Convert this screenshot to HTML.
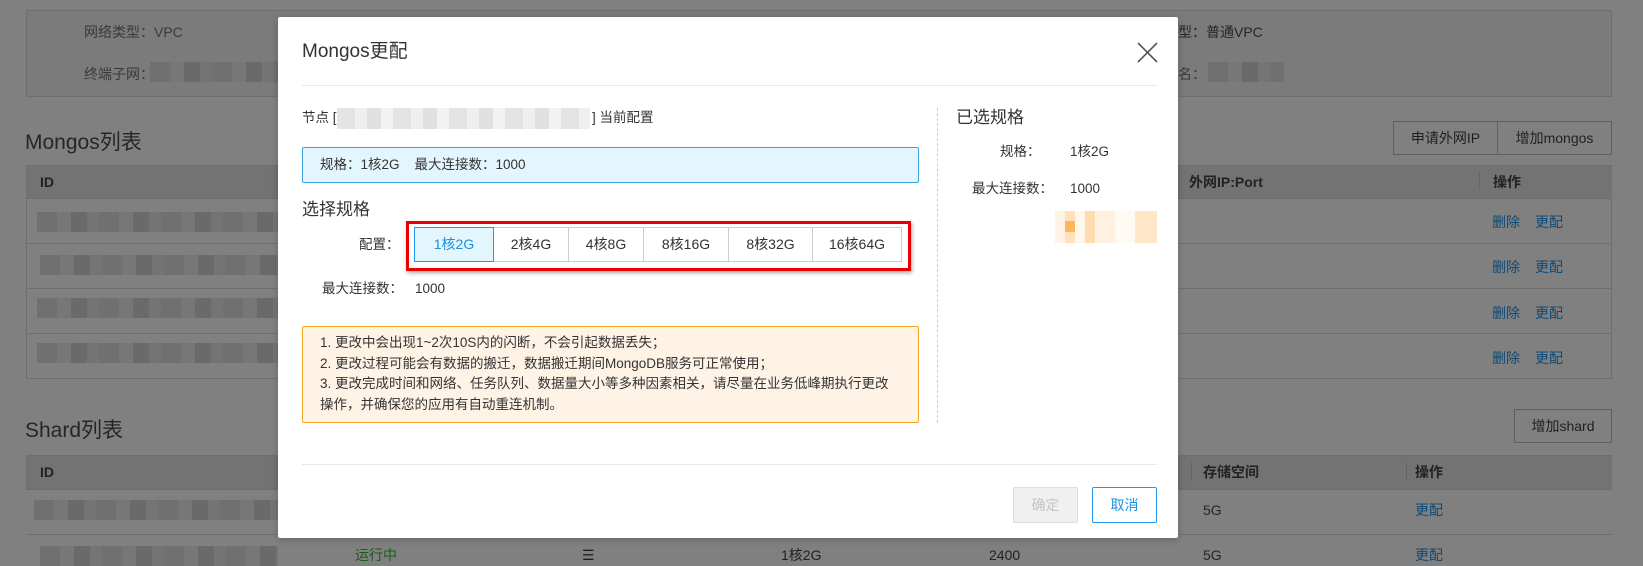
<!DOCTYPE html>
<html><head><meta charset="utf-8"><style>
*{margin:0;padding:0;box-sizing:border-box}
body{width:1643px;height:555px;overflow:hidden;background:#808080;font-family:"Liberation Sans","Noto Sans CJK SC",sans-serif;color:#222;position:relative;font-size:14px}
.a{position:absolute;white-space:nowrap;line-height:20px}
.bg{color:#262626}
.blur{position:absolute;background:repeating-linear-gradient(90deg,#707070 0 20px,#777 20px 34px,#6a6a6a 34px 50px,#747474 50px 62px);height:20px}
.hd{position:absolute;background:#737373;border-top:1px solid #6e6e6e;border-bottom:1px solid #6e6e6e}
.row{position:absolute;border-bottom:1px solid #6f6f6f}
.lnk{color:#0c4a78}
.btn{position:absolute;border:1px solid #5f5f5f;background:#808080;color:#1f1f1f;text-align:center}
.m{position:absolute;left:278px;top:17px;width:900px;height:521px;background:#fff;border-radius:2px;box-shadow:0 2px 8px rgba(0,0,0,.2)}
.c{color:#333}
.seg{position:absolute;top:227px;height:35px;border:1px solid #ccc;text-align:center;line-height:33px;color:#333;font-size:14px;background:#fff}
</style></head><body>
<div class="a" style="left:26px;top:10px;width:1586px;height:87px;border:1px solid #6e6e6e;background:#7b7b7b"></div>
<div class="a bg" style="left:84px;top:22px;color:#3a3a3a">网络类型：VPC</div>
<div class="a bg" style="left:84px;top:64px;color:#3a3a3a">终端子网：</div>
<div class="blur" style="left:150px;top:62px;width:130px"></div>
<div class="a bg" style="left:1178px;top:22px">型：普通VPC</div>
<div class="a bg" style="left:1178px;top:64px;color:#3a3a3a">名：</div>
<div class="blur" style="left:1208px;top:62px;width:76px"></div>
<div class="a bg" style="left:25px;top:130px;font-size:21px;line-height:26px">Mongos列表</div>
<div class="btn" style="left:1393px;top:121px;width:105px;height:34px;line-height:32px">申请外网IP</div>
<div class="btn" style="left:1497px;top:121px;width:115px;height:34px;line-height:32px">增加mongos</div>
<div class="hd" style="left:26px;top:165px;width:1586px;height:34px"></div>
<div class="a" style="left:40px;top:172px;font-weight:bold;color:#222">ID</div>
<div class="a" style="left:1189px;top:172px;font-weight:bold;color:#222">外网IP:Port</div>
<div class="a" style="left:1479px;top:172px;width:1px;height:18px;background:#666"></div>
<div class="a" style="left:1493px;top:172px;font-weight:bold;color:#222">操作</div>
<div class="a" style="left:26px;top:198px;width:1px;height:181px;background:#6e6e6e"></div>
<div class="a" style="left:1611px;top:198px;width:1px;height:181px;background:#6e6e6e"></div>
<div class="row" style="left:26px;top:198px;width:1586px;height:46px"></div>
<div class="row" style="left:26px;top:243px;width:1586px;height:46px"></div>
<div class="row" style="left:26px;top:288px;width:1586px;height:46px"></div>
<div class="row" style="left:26px;top:333px;width:1586px;height:46px"></div>
<div class="blur" style="left:37px;top:212px;width:241px"></div>
<div class="blur" style="left:40px;top:255px;width:238px"></div>
<div class="blur" style="left:37px;top:298px;width:241px"></div>
<div class="blur" style="left:37px;top:343px;width:241px"></div>
<div class="a lnk" style="left:1492px;top:212px">删除</div><div class="a lnk" style="left:1535px;top:212px">更配</div>
<div class="a lnk" style="left:1492px;top:257px">删除</div><div class="a lnk" style="left:1535px;top:257px">更配</div>
<div class="a lnk" style="left:1492px;top:303px">删除</div><div class="a lnk" style="left:1535px;top:303px">更配</div>
<div class="a lnk" style="left:1492px;top:348px">删除</div><div class="a lnk" style="left:1535px;top:348px">更配</div>
<div class="a bg" style="left:25px;top:418px;font-size:21px;line-height:26px">Shard列表</div>
<div class="btn" style="left:1514px;top:409px;width:98px;height:34px;line-height:32px">增加shard</div>
<div class="hd" style="left:26px;top:455px;width:1586px;height:35px"></div>
<div class="a" style="left:40px;top:462px;font-weight:bold;color:#222">ID</div>
<div class="a" style="left:1191px;top:462px;width:1px;height:18px;background:#666"></div>
<div class="a" style="left:1203px;top:462px;font-weight:bold;color:#222">存储空间</div>
<div class="a" style="left:1406px;top:462px;width:1px;height:18px;background:#666"></div>
<div class="a" style="left:1415px;top:462px;font-weight:bold;color:#222">操作</div>
<div class="row" style="left:26px;top:489px;width:1586px;height:46px"></div>
<div class="blur" style="left:34px;top:500px;width:244px"></div>
<div class="blur" style="left:40px;top:546px;width:238px"></div>
<div class="a bg" style="left:1203px;top:500px">5G</div>
<div class="a lnk" style="left:1415px;top:500px">更配</div>
<div class="a bg" style="left:1203px;top:545px">5G</div>
<div class="a lnk" style="left:1415px;top:545px">更配</div>
<div class="a" style="left:989px;top:545px;color:#222">2400</div>
<div class="a" style="left:582px;top:545px;color:#1f1f1f">☰</div>
<div class="a" style="left:355px;top:545px;color:#1a5c1a">运行中</div>
<div class="a" style="left:781px;top:545px;color:#222">1核2G</div>

<div class="m"></div>
<div class="a" style="left:302px;top:40px;font-size:19px;line-height:24px;color:#333">Mongos更配</div>
<svg class="a" style="left:1137px;top:42px" width="21" height="21" viewBox="0 0 21 21"><path d="M1 1L20 20M20 1L1 20" stroke="#555" stroke-width="1.6"/></svg>
<div class="a" style="left:302px;top:85px;width:855px;height:1px;background:#e8e8e8"></div>
<div class="a c" style="left:302px;top:108px;font-size:13.5px">节点 [</div>
<div class="a" style="left:337px;top:108px;width:253px;height:21px;background:repeating-linear-gradient(90deg,#e4e4e4 0 18px,#efefef 18px 30px,#e0e0e0 30px 44px,#f2f2f2 44px 56px)"></div>
<div class="a c" style="left:592px;top:108px;font-size:13.5px">] 当前配置</div>
<div class="a" style="left:302px;top:147px;width:617px;height:36px;background:#e4f6fd;border:1px solid #3fa2e0;border-radius:2px"></div>
<div class="a c" style="left:320px;top:155px;font-size:13.5px">规格：1核2G&nbsp;&nbsp;&nbsp;&nbsp;最大连接数：1000</div>
<div class="a c" style="left:302px;top:199px;font-size:17px;line-height:22px">选择规格</div>
<div class="a c" style="left:359px;top:235px;font-size:13.5px">配置：</div>
<div class="a" style="left:406px;top:221px;width:505px;height:50px;border:3px solid #e80000;box-shadow:1px 2px 4px rgba(0,0,0,.35)"></div>
<div class="seg" style="left:414px;width:80px;background:#e4f6fd;border-color:#2196f3;color:#1a90e0;z-index:2">1核2G</div>
<div class="seg" style="left:493px;width:76px">2核4G</div>
<div class="seg" style="left:568px;width:76px">4核8G</div>
<div class="seg" style="left:643px;width:86px">8核16G</div>
<div class="seg" style="left:728px;width:85px">8核32G</div>
<div class="seg" style="left:812px;width:90px">16核64G</div>
<div class="a c" style="left:322px;top:279px;font-size:13.5px">最大连接数：</div>
<div class="a c" style="left:415px;top:279px;font-size:13.5px">1000</div>
<div class="a" style="left:302px;top:326px;width:617px;height:97px;background:#fff3e6;border:1px solid #f5a623;border-radius:2px"></div>
<div class="a c" style="left:320px;top:333px;font-size:13.5px;line-height:20.5px">1. 更改中会出现1~2次10S内的闪断，不会引起数据丢失；<br>2. 更改过程可能会有数据的搬迁，数据搬迁期间MongoDB服务可正常使用；<br>3. 更改完成时间和网络、任务队列、数据量大小等多种因素相关，请尽量在业务低峰期执行更改<br>操作，并确保您的应用有自动重连机制。</div>
<div class="a" style="left:937px;top:108px;width:0;height:315px;border-left:1px dashed #ccc"></div>
<div class="a c" style="left:956px;top:107px;font-size:17px;line-height:22px">已选规格</div>
<div class="a c" style="left:1000px;top:142px;font-size:13.5px">规格：</div>
<div class="a c" style="left:1070px;top:142px;font-size:13.5px">1核2G</div>
<div class="a c" style="left:972px;top:179px;font-size:13.5px">最大连接数：</div>
<div class="a c" style="left:1070px;top:179px;font-size:13.5px">1000</div>
<div class="a" style="left:1055px;top:211px;width:102px;height:32px;background:linear-gradient(90deg,#fff3e6 0 10px,#ffe0b8 10px 20px,#fff6ec 20px 30px,#ffdcb0 30px 40px,#fff0e0 40px 60px,#fffaf4 60px 80px,#ffe6c8 80px 102px)"></div>
<div class="a" style="left:1065px;top:221px;width:10px;height:11px;background:#ffb55a"></div>
<div class="a" style="left:302px;top:464px;width:855px;height:1px;background:#e8e8e8"></div>
<div class="a" style="left:1013px;top:487px;width:65px;height:36px;background:#f0f0f0;border:1px solid #ddd;border-radius:2px;color:#c4c4c4;text-align:center;line-height:34px">确定</div>
<div class="a" style="left:1092px;top:487px;width:65px;height:36px;background:#fff;border:1px solid #2196f3;border-radius:2px;color:#1a90e0;text-align:center;line-height:34px">取消</div>
</body></html>
